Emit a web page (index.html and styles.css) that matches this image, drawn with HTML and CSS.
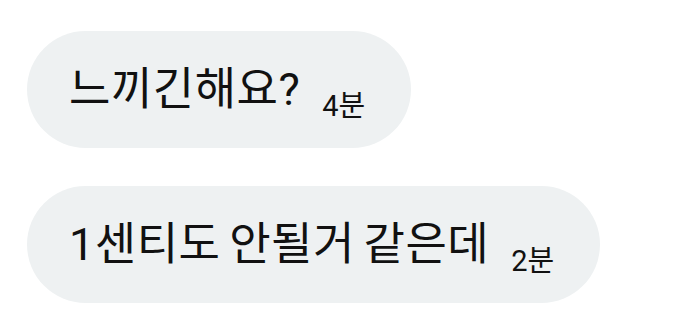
FILE: index.html
```html
<!DOCTYPE html>
<html>
<head>
  <meta charset="utf-8">
  <title>Chat</title>
  <link rel="stylesheet" href="styles.css">
</head>
<body>
  <div class="chat">
    <div class="bubble">
      <span class="msg">느끼긴해요?</span><span class="time">4분</span>
    </div>
    <div class="bubble">
      <span class="msg">1센티도 안될거 같은데</span><span class="time">2분</span>
    </div>
  </div>
</body>
</html>
```

FILE: styles.css
```css
body {
  margin: 0;
  background-color: #ffffff;
  font-family: Roboto, "Noto Sans CJK KR", sans-serif;
  color: #111111;
}

.chat {
  display: flex;
  flex-direction: column;
  align-items: flex-start;
  gap: 38px;
  padding: 31px 0 0 27px;
}

.bubble {
  display: flex;
  align-items: center;
  height: 117px;
  box-sizing: border-box;
  padding: 0 46px 0 42px;
  background-color: #eef1f2;
  border-radius: 59px;
}

.msg {
  font-size: 45px;
  line-height: 1;
  letter-spacing: 0.5px;
  word-spacing: -3px;
  white-space: pre;
}

.time {
  font-size: 29px;
  line-height: 1;
  margin-left: 22px;
  margin-top: 34px;
}
```
